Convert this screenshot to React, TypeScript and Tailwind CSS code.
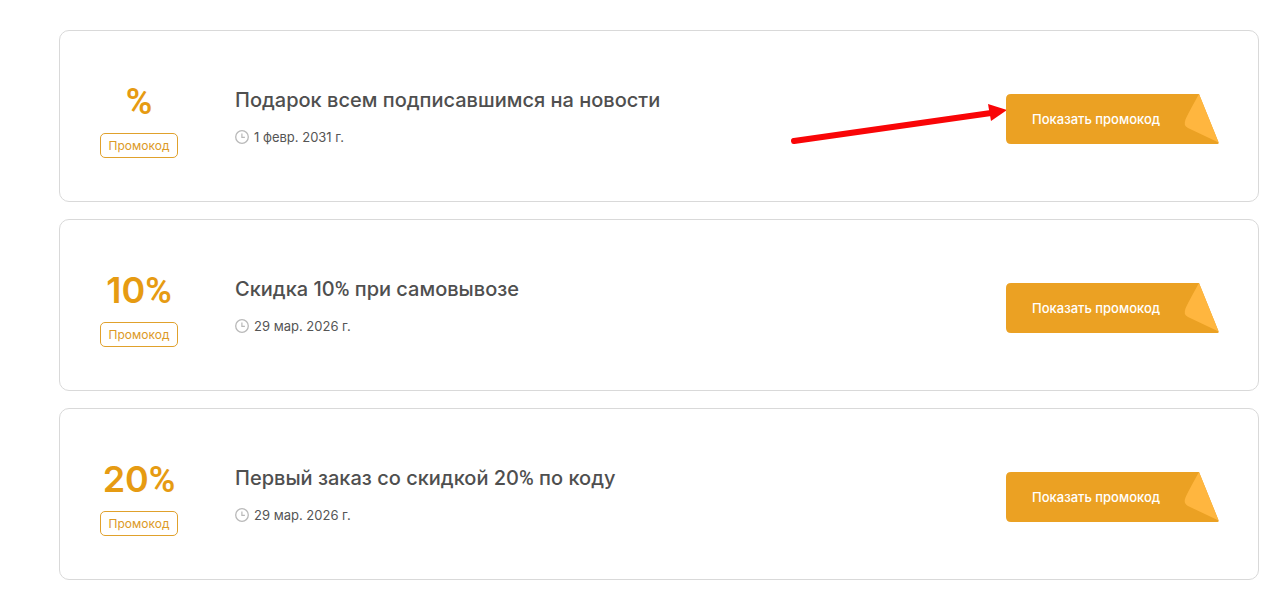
import React from 'react';

interface Promo {
  id: number;
  discount: string;
  title: string;
  date: string;
  highlighted?: boolean;
}

const promos: Promo[] = [
  {
    id: 1,
    discount: '%',
    title: 'Подарок всем подписавшимся на новости',
    date: '1 февр. 2031 г.',
    highlighted: true,
  },
  { id: 2, discount: '10%', title: 'Скидка 10% при самовывозе', date: '29 мар. 2026 г.' },
  { id: 3, discount: '20%', title: 'Первый заказ со скидкой 20% по коду', date: '29 мар. 2026 г.' },
];

// The percent sign is set in Roboto, its shape is narrower than Inter's
const PercentText: React.FC<{ text: string }> = ({ text }) => (
  <>
    {text.split(/(%)/).map((part, i) =>
      part === '%' ? (
        <span key={i} className="font-['Roboto',sans-serif] leading-none">
          %
        </span>
      ) : (
        part
      )
    )}
  </>
);

const ClockIcon = () => (
  <svg width="14" height="14" viewBox="0 0 14 14" fill="none" stroke="#b9b9b9" aria-hidden="true">
    <circle cx="7" cy="7" r="6.3" strokeWidth="1.3" />
    <path d="M6.9 3.6V7.3H9.9" strokeWidth="1.2" />
  </svg>
);

const Arrow = () => (
  <svg
    className="pointer-events-none absolute right-full top-2 -mr-px"
    width="217"
    height="44"
    viewBox="0 0 217 44"
    aria-hidden="true"
  >
    <path d="M4 39L201 11" stroke="#f90507" strokeWidth="6" strokeLinecap="round" />
    <path d="M198 2L217 8L201 19Z" fill="#f90507" />
  </svg>
);

const PromoButton = () => (
  <button type="button" className="relative block h-[50px] w-[213px] cursor-pointer text-left">
    {/* Ribbon with the folded corner */}
    <svg
      className="absolute inset-0"
      width="213"
      height="50"
      viewBox="0 0 213 50"
      aria-hidden="true"
    >
      <path
        d="M5 0H193L212.6 48.4Q213 50 211.5 50H5Q0 50 0 45V5Q0 0 5 0Z"
        fill="#eba123"
      />
      <path
        d="M193 0L212.6 48.6L182 34Q177 31.5 179.5 25.5Q181 21.5 193 0Z"
        fill="#ffb63f"
      />
    </svg>
    <span className="relative block pl-[26px] text-[13px] leading-5 font-medium text-white">
      Показать промокод
    </span>
  </button>
);

const PromoCard: React.FC<{ promo: Promo }> = ({ promo }) => (
  <article className="flex items-center rounded-[10px] border border-[#d9d9d9] pt-[50px] pr-[39px] pb-[43px] pl-10">
    <div className="flex w-[78px] shrink-0 flex-col items-center gap-3">
      <div className="text-4xl leading-10 font-semibold text-[#e69b12]">
        <PercentText text={promo.discount} />
      </div>
      <div className="flex h-[25px] w-full items-center justify-center rounded-[5px] border border-[#e0a12c] text-xs text-[#dc9a26]">
        Промокод
      </div>
    </div>

    <div className="ml-[57px] min-w-0 flex-1 pb-[6px]">
      <h2 className="text-xl leading-7 font-medium text-[#4f4f4f]">
        <PercentText text={promo.title} />
      </h2>
      <div className="mt-[13px] flex items-center gap-[5px] text-[13px] leading-5 text-[#555555]">
        <ClockIcon />
        <time>{promo.date}</time>
      </div>
    </div>

    <div className="relative shrink-0 pb-px">
      {promo.highlighted && <Arrow />}
      <PromoButton />
    </div>
  </article>
);

export default function App() {
  return (
    <main className="flex min-h-screen flex-col gap-[17px] bg-white pt-[30px] pr-[6px] pb-[10px] pl-[59px] font-['Inter',sans-serif]">
      {promos.map((promo) => (
        <PromoCard key={promo.id} promo={promo} />
      ))}
    </main>
  );
}
